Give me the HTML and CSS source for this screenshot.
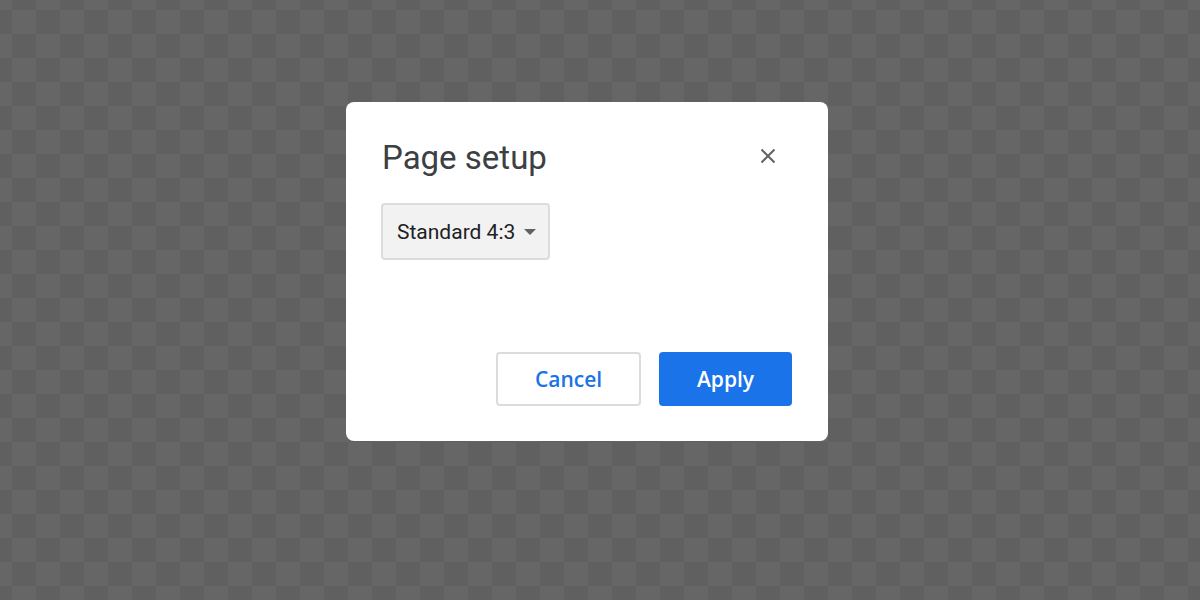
FILE: index.html
```html
<!DOCTYPE html>
<html>
<head>
<meta charset="utf-8">
<link rel="stylesheet" href="styles.css">
</head>
<body>
<div class="dialog">
  <div class="header">
    <h1 class="title">Page setup</h1>
    <button class="close" aria-label="Close">
      <svg width="16" height="16" viewBox="0 0 16 16"><path d="M1.5 1.5 L14.5 14.5 M14.5 1.5 L1.5 14.5" stroke="#5f6368" stroke-width="2" fill="none"/></svg>
    </button>
  </div>
  <div class="select">
    <span class="select-label">Standard 4:3</span>
    <span class="caret"></span>
  </div>
  <div class="actions">
    <button class="btn btn-cancel">Cancel</button>
    <button class="btn btn-apply">Apply</button>
  </div>
</div>
</body>
</html>
```
FILE: styles.css
```css
html, body {
  margin: 0;
  padding: 0;
  width: 1200px;
  height: 600px;
  overflow: hidden;
}
body {
  background-color: #666666;
  background-image:
    linear-gradient(45deg, #606060 25%, transparent 25%, transparent 75%, #606060 75%),
    linear-gradient(45deg, #606060 25%, transparent 25%, transparent 75%, #606060 75%);
  background-size: 48px 48px;
  background-position: -12px -14px, 12px 10px;
  font-family: Roboto, "Noto Sans", Arial, sans-serif;
  display: flex;
  align-items: flex-start;
}
.dialog {
  margin: 102px 0 0 346px;
  width: 482px;
  height: 339px;
  box-sizing: border-box;
  background: #ffffff;
  border-radius: 8px;
  padding: 0 36px 35px 36px;
  display: flex;
  flex-direction: column;
}
.header {
  display: flex;
  justify-content: space-between;
  align-items: flex-start;
  height: 101px;
}
.title {
  margin: 33px 0 0 0;
  font-size: 33px;
  font-weight: 400;
  color: #3c4043;
  line-height: 46px;
  letter-spacing: 0;
}
.close {
  margin: 42px 12px 0 0;
  width: 24px;
  height: 24px;
  padding: 0;
  border: 0;
  background: none;
  display: flex;
  align-items: center;
  justify-content: center;
}
.select {
  align-self: flex-start;
  margin-left: -1px;
  width: 169px;
  height: 57px;
  box-sizing: border-box;
  background: #f2f2f2;
  border: 2px solid #dadce0;
  border-radius: 4px;
  display: flex;
  align-items: center;
  padding: 0 0 0 14px;
  gap: 9px;
  white-space: nowrap;
}
.select-label {
  font-size: 21px;
  color: #202124;
  flex-shrink: 0;
}
.caret {
  flex-shrink: 0;
  width: 0;
  height: 0;
  border-left: 6px solid transparent;
  border-right: 6px solid transparent;
  border-top: 6px solid #5f6368;
}
.actions {
  margin-top: auto;
  display: flex;
  justify-content: flex-end;
  gap: 18px;
}
.btn {
  height: 54px;
  border-radius: 4px;
  font-family: "Open Sans", Roboto, sans-serif;
  font-size: 21px;
  font-weight: 600;
  box-sizing: border-box;
  cursor: pointer;
}
.btn-cancel {
  width: 145px;
  background: #ffffff;
  border: 2px solid #dadce0;
  color: #1a73e8;
}
.btn-apply {
  width: 133px;
  background: #1a73e8;
  border: 0;
  color: #ffffff;
}
```
